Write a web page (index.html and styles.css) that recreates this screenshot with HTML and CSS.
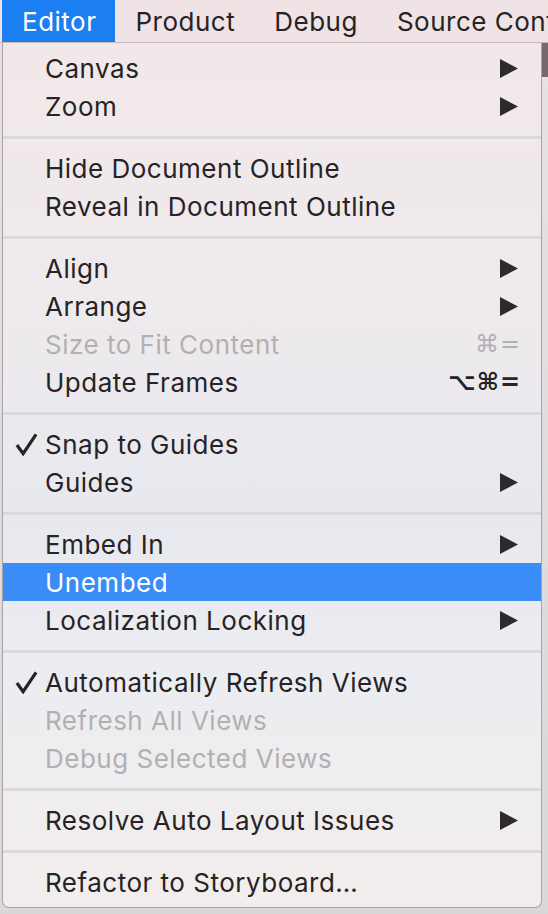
FILE: index.html
```html
<!DOCTYPE html>
<html>
<head>
<meta charset="utf-8">
<link rel="stylesheet" href="styles.css">
</head>
<body>
<div class="screen">
  <div class="backdrop-strip"></div>
  <nav class="menubar">
    <span class="mb-item active">Editor</span>
    <span class="mb-item">Product</span>
    <span class="mb-item">Debug</span>
    <span class="mb-item">Source Control</span>
  </nav>
  <div class="menu">
    <div class="row"><span class="label">Canvas</span><svg class="arrow" viewBox="0 0 18 19"><polygon points="0,0 18,9.5 0,19"/></svg></div>
    <div class="row"><span class="label">Zoom</span><svg class="arrow" viewBox="0 0 18 19"><polygon points="0,0 18,9.5 0,19"/></svg></div>
    <div class="sep"></div>
    <div class="row"><span class="label">Hide Document Outline</span></div>
    <div class="row"><span class="label">Reveal in Document Outline</span></div>
    <div class="sep"></div>
    <div class="row"><span class="label">Align</span><svg class="arrow" viewBox="0 0 18 19"><polygon points="0,0 18,9.5 0,19"/></svg></div>
    <div class="row"><span class="label">Arrange</span><svg class="arrow" viewBox="0 0 18 19"><polygon points="0,0 18,9.5 0,19"/></svg></div>
    <div class="row disabled"><span class="label">Size to Fit Content</span><span class="shortcut">⌘=</span></div>
    <div class="row"><span class="label">Update Frames</span><span class="shortcut strong">⌥⌘=</span></div>
    <div class="sep"></div>
    <div class="row"><svg class="check" viewBox="0 0 24 24"><path d="M2 12.5 L8.5 21.5 L22 1.5"/></svg><span class="label">Snap to Guides</span></div>
    <div class="row"><span class="label">Guides</span><svg class="arrow" viewBox="0 0 18 19"><polygon points="0,0 18,9.5 0,19"/></svg></div>
    <div class="sep"></div>
    <div class="row"><span class="label">Embed In</span><svg class="arrow" viewBox="0 0 18 19"><polygon points="0,0 18,9.5 0,19"/></svg></div>
    <div class="row selected"><span class="label">Unembed</span></div>
    <div class="row"><span class="label">Localization Locking</span><svg class="arrow" viewBox="0 0 18 19"><polygon points="0,0 18,9.5 0,19"/></svg></div>
    <div class="sep"></div>
    <div class="row"><svg class="check" viewBox="0 0 24 24"><path d="M2 12.5 L8.5 21.5 L22 1.5"/></svg><span class="label">Automatically Refresh Views</span></div>
    <div class="row disabled"><span class="label">Refresh All Views</span></div>
    <div class="row disabled"><span class="label">Debug Selected Views</span></div>
    <div class="sep"></div>
    <div class="row"><span class="label">Resolve Auto Layout Issues</span><svg class="arrow" viewBox="0 0 18 19"><polygon points="0,0 18,9.5 0,19"/></svg></div>
    <div class="sep"></div>
    <div class="row"><span class="label">Refactor to Storyboard…</span></div>
  </div>
</div>
</body>
</html>
```
FILE: styles.css
```css
html, body {
  margin: 0;
  padding: 0;
}
body {
  width: 548px;
  height: 914px;
  overflow: hidden;
  background: #dcdadc;
  font-family: "Inter", "Liberation Sans", "DejaVu Sans", sans-serif;
  color: #272324;
}
.screen {
  position: relative;
  width: 548px;
  height: 914px;
  background: linear-gradient(180deg, #e7e2e3 0%, #d9d7da 100%);
}
.backdrop-strip {
  position: absolute;
  right: 0;
  top: 43px;
  width: 8px;
  height: 34px;
  background: #76686c;
}
.menubar {
  position: relative;
  display: flex;
  height: 42px;
  padding-left: 2px;
  background: #efe3e5;
  border-bottom: 1px solid #c4babc;
  white-space: nowrap;
  overflow: hidden;
}
.mb-item {
  display: flex;
  align-items: center;
  padding: 0 19px 0 20px;
  font-size: 26px;
  letter-spacing: 0.5px;
  color: #272324;
}
.mb-item.active {
  background: #1b7ff2;
  color: #ffffff;
}
.menu {
  position: relative;
  margin-left: 2px;
  width: 538px;
  padding: 6px 0 6px;
  background: linear-gradient(180deg, #f2e8ea 0%, #eeeaed 30%, #e7e9ef 55%, #ecedf1 75%, #f3eded 100%);
  border: 1px solid #aaa3a5;
  border-top: none;
  border-radius: 0 0 7px 7px;
}
.row {
  position: relative;
  display: flex;
  align-items: center;
  height: 38px;
  padding: 0 23px 0 42px;
  font-size: 26px;
  letter-spacing: 0.5px;
}
.label {
  flex: 1;
  white-space: nowrap;
}
.row.disabled {
  color: #b4afb1;
}
.row.selected {
  background: #3a8cf6;
  color: #ffffff;
}
.arrow {
  width: 18px;
  height: 19px;
  fill: #2e292a;
}
.shortcut {
  margin-right: -3px;
  font-family: "DejaVu Sans", "Inter", sans-serif;
  font-size: 24px;
  letter-spacing: 1px;
}
.shortcut.strong {
  font-weight: bold;
}
.check {
  position: absolute;
  left: 12px;
  top: 8px;
  width: 23px;
  height: 23px;
  fill: none;
  stroke: #272324;
  stroke-width: 3.4;
  stroke-linecap: butt;
  stroke-linejoin: miter;
}
.sep {
  height: 24px;
  display: flex;
  align-items: center;
}
.sep::before {
  content: "";
  display: block;
  width: 100%;
  height: 3px;
  background: #dcd9dc;
}
```
